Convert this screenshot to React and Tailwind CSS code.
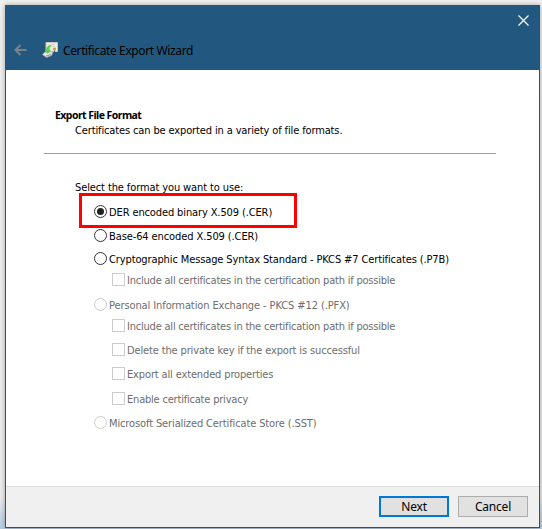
import React from "react";

const OPTIONS = [
  { kind: "radio", checked: true, label: "DER encoded binary X.509 (.CER)", row: "h-[24px]", fit: "tracking-[-0.12px]" },
  { kind: "radio", label: "Base-64 encoded X.509 (.CER)", row: "h-[23px]", fit: "tracking-[-0.1px]" },
  { kind: "radio", label: "Cryptographic Message Syntax Standard - PKCS #7 Certificates (.P7B)", row: "h-[21px]", fit: "tracking-[-0.115px]" },
  { kind: "check", disabled: true, label: "Include all certificates in the certification path if possible", row: "h-[25px]", fit: "tracking-[-0.21px]" },
  { kind: "radio", disabled: true, label: "Personal Information Exchange - PKCS #12 (.PFX)", row: "h-[21px]", fit: "tracking-[-0.1px]" },
  { kind: "check", disabled: true, label: "Include all certificates in the certification path if possible", row: "h-[24px]", fit: "tracking-[-0.21px]" },
  { kind: "check", disabled: true, label: "Delete the private key if the export is successful", row: "h-[24px]", fit: "tracking-[-0.14px]" },
  { kind: "check", disabled: true, label: "Export all extended properties", row: "h-[25px]", fit: "tracking-[-0.14px]" },
  { kind: "check", disabled: true, label: "Enable certificate privacy", row: "h-[24px]", fit: "tracking-[-0.2px]" },
  { kind: "radio", disabled: true, label: "Microsoft Serialized Certificate Store (.SST)", row: "h-[13px]", fit: "tracking-[-0.12px]" },
];

function Option({ kind, checked, disabled, label, row, fit }) {
  return (
    <div className={`flex items-start ${row} ${kind === "check" ? "pl-[18px]" : ""}`}>
      <span
        className={`flex size-[13px] shrink-0 items-center justify-center border bg-white ${kind === "radio" ? "rounded-full" : ""} ${disabled ? "border-[#cccccc]" : "border-[#333333]"}`}
      >
        {checked && <span className="size-[7px] rounded-full bg-[#222222]" />}
      </span>
      <span className={`ml-[2px] leading-[16px] ${fit} ${disabled ? "text-[#6d6d6d]" : "text-black"}`}>{label}</span>
    </div>
  );
}

function CertificateIcon() {
  return (
    <svg width="16" height="16" viewBox="0 0 16 16">
      <path d="M4 0.500h11.500v9H4z" fill="#eeeadc" stroke="#c9c8b9" />
      <path d="M9 2.500h4M9.500 4.500h3" stroke="#d5d2c6" />
      <path d="M0.500 12.500 3 10h8l-1.500 3.500-5 2z" fill="#e3e5e3" stroke="#a7adab" strokeWidth=".7" />
      <path d="M4 14.200l5-1.700" stroke="#747f7e" strokeWidth=".8" />
      <path d="M8.500 3C5.500 4 4.200 6 4.500 8H2.500l3.200 3.500L8.500 8H7c0-2 .5-3 2-4z" fill="#55d448" stroke="#36a935" strokeWidth=".3" />
      <circle cx="12.500" cy="7" r="1.600" fill="#dc9d24" />
      <path d="M12.500 8.500v1.500" stroke="#315fa3" />
    </svg>
  );
}

export default function App() {
  return (
    <div className="h-[529px] w-[542px] overflow-hidden bg-[linear-gradient(to_bottom,#f0f0f0_0%,#ececec_94%,#b5cbe0_100%)] pt-[5px] pl-[5px] font-['DejaVu_Sans_Condensed','DejaVu_Sans',sans-serif] text-[11px] whitespace-nowrap">
      <div className="flex h-[523px] w-[535px] flex-col border border-[#22587f] bg-white shadow-[0_0_5px_0_#00000055]">
        <header className="h-[64px] shrink-0 bg-[#22587f]">
          <div className="flex h-[32px] justify-end pt-[9px] pr-[10px]">
            <svg width="11" height="11" viewBox="0 0 11 11" stroke="white" strokeWidth="1.2">
              <path d="M.5.5l10 10M10.500.5l-10 10" />
            </svg>
          </div>
          <div className="flex h-[24px] items-center pl-[8px]">
            <svg width="13" height="12" viewBox="0 0 13 12" fill="none" stroke="#7d8286" strokeWidth="2">
              <path d="M12.500 6H1.500M6.500 1L1.500 6 6.500 11" />
            </svg>
            <span className="ml-[15px]"><CertificateIcon /></span>
            <span className="mt-[2px] ml-[5px] font-['Noto_Sans',sans-serif] text-[12px] leading-[16px] tracking-[-0.38px] text-black">Certificate Export Wizard</span>
          </div>
        </header>
        <main className="h-[416px] shrink-0 pl-[38px]">
          <div className="h-[84px] w-[452px] border-b border-[#a0a0a0] pt-[37px] pl-[11px]">
            <h1 className="font-['Noto_Sans',sans-serif] text-[10.500px] leading-[16px] font-bold tracking-[-0.55px] text-black">Export File Format</h1>
            <p className="pl-[20px] leading-[16px] tracking-[-0.13px] text-black">Certificates can be exported in a variety of file formats.</p>
          </div>
          <p className="mt-[26px] h-[13px] pl-[31px] leading-[16px] tracking-[-0.11px] text-black">Select the format you want to use:</p>
          <div className="relative mt-[12px] pl-[50px]">
            <div className="absolute top-[-12px] left-[35px] h-[35px] w-[218px] border-3 border-[#ff0000]" />
            {OPTIONS.map((option, i) => (
              <Option key={i} {...option} />
            ))}
          </div>
        </main>
        <footer className="flex grow justify-end gap-[9px] border-t border-[#dfdfdf] bg-[#f0f0f0] pt-[9px] pr-[11px] font-['Noto_Sans',sans-serif] text-[12px] tracking-[-0.2px] text-black">
          <button className="h-[21px] w-[70px] border-2 border-[#0078d7] bg-[#e1e1e1] leading-[17px]">Next</button>
          <button className="h-[21px] w-[70px] border border-[#adadad] bg-[#e1e1e1] leading-[19px]">Cancel</button>
        </footer>
      </div>
    </div>
  );
}
